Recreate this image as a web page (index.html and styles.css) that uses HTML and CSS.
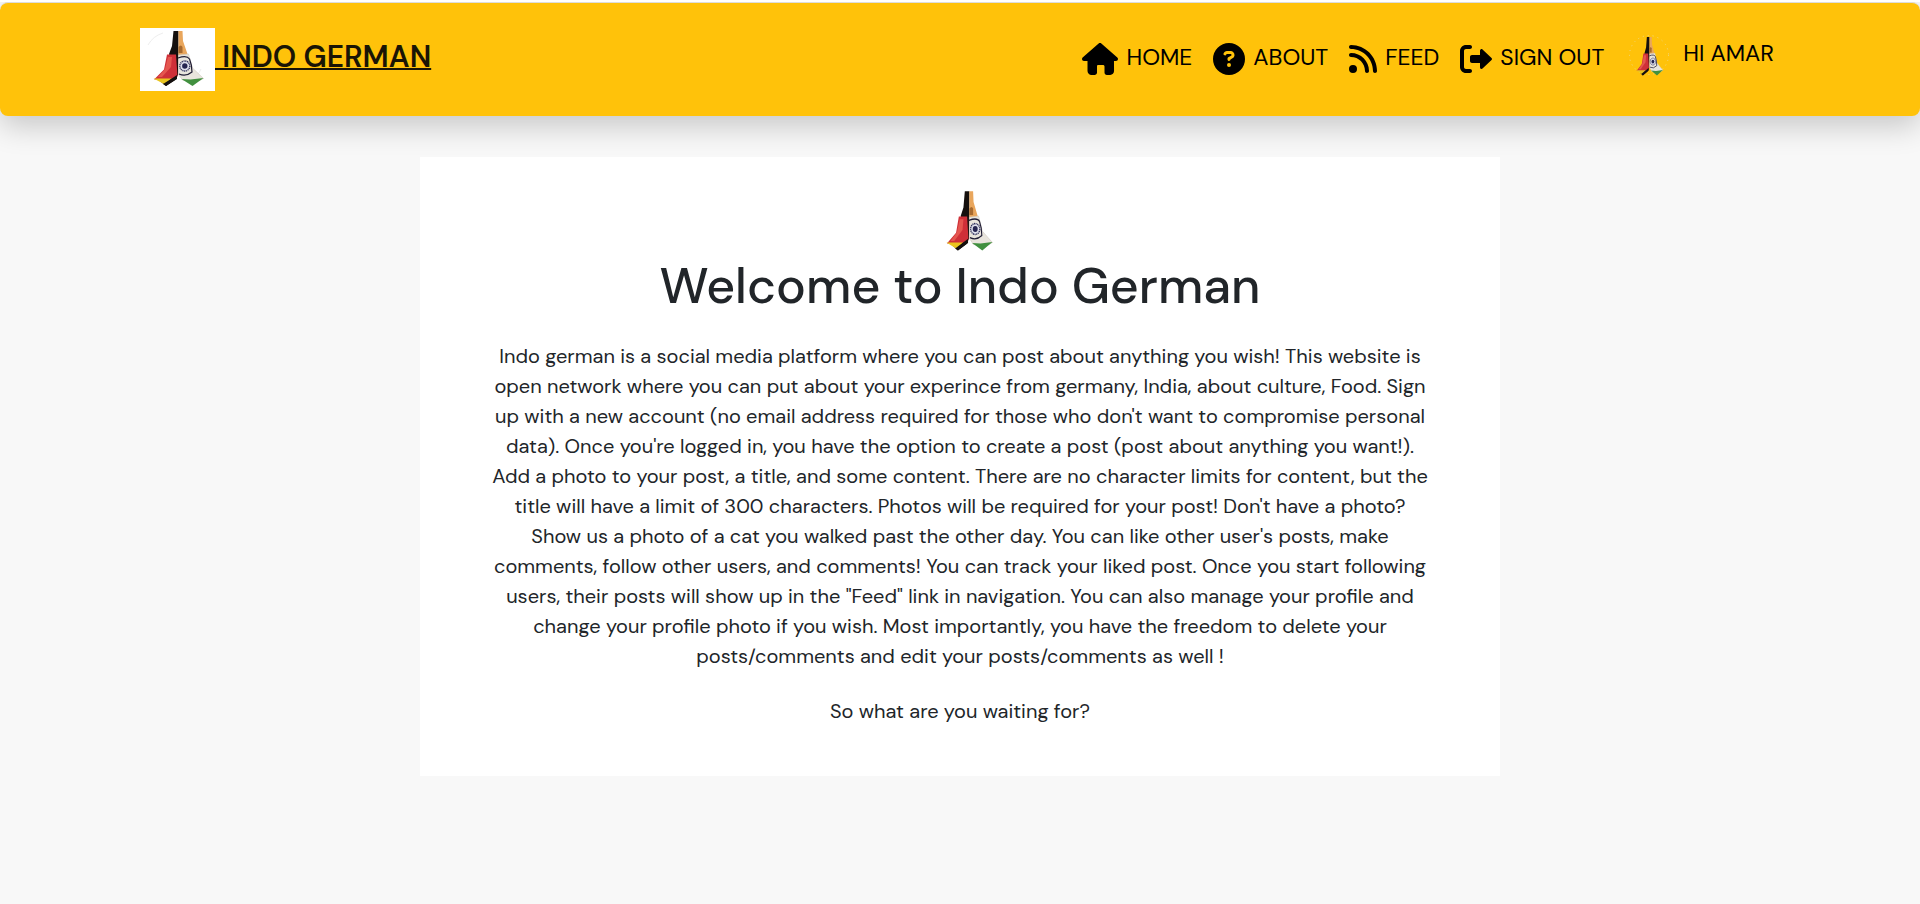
FILE: index.html
```html
<!DOCTYPE html>
<html lang="en">
<head>
<meta charset="utf-8">
<title>Indo German</title>
<link rel="stylesheet" href="styles.css">
</head>
<body>
<svg class="sprite" aria-hidden="true">
  <symbol id="hands" viewBox="0 0 75 63" preserveAspectRatio="none">
    <path fill="#15100e" d="M33.500 3h5v23l-.5 21-3 5-9 6-5-4 13-9-5-19 3-8z"/>
    <path fill="#e9a65c" d="M38.500 3h4l.5 10 5 14.500h-9.500z"/>
    <path fill="#a86a2e" d="M38.500 19q2.500-3 4 0v6h-4z"/>
    <path fill="#cf3038" d="M27 26.500l9 0 1.500 22-7 3H14l10-10z"/>
    <path fill="#e4564f" d="M28 29l4 0-1 10-9 10h-4l7-8z"/>
    <path fill="#e9c51f" d="M13.500 50.500h18l-6.500 6z"/>
    <path fill="#15100e" d="M31 51l6-4v4l-11 7-3-2z"/>
    <path fill="#e9e5dd" stroke="#cfc8bd" stroke-width=".6" d="M38.500 27l10-1 4 14 11 10.500-4 2H43l-4.500-6z"/>
    <path fill="#41903f" d="M41.500 51l9 .5 13-1.500-11 8z"/>
    <path fill="none" stroke="#201d35" stroke-width="1.200" d="M38 30q9-3 11.500 1 2.500 6 2.500 13-6 5-13 2"/>
    <circle cx="44.800" cy="38" r="5" fill="#dfe0ec" stroke="#34345f" stroke-width="1.400" stroke-dasharray="1.200 .6"/>
    <circle cx="44.800" cy="38" r="2.700" fill="#252450"/>
  </symbol>
</svg>
<header class="navbar">
  <a class="brand" href="#"><svg class="brand-logo" aria-hidden="true"><path d="M8 17Q13 8 23 5M48 52Q58 49 61 41" fill="none" stroke="#eeeeee"/><use href="#hands"/></svg><span>&nbsp;INDO GERMAN</span></a>
  <nav class="links">
    <a href="#"><svg width="36" height="32" viewBox="0 0 576 512" aria-hidden="true"><path d="M575.8 255.500c0 18-15 32.100-32 32.100h-32l.7 160.200c.2 35.500-28.500 64.300-64 64.300h-48.400c-22.100 0-40-17.900-40-40V376c0-17.700-14.300-24-32-24h-64c-17.700 0-24 6.300-24 24v96c0 22.100-17.900 40-40 40h-48c-35.300 0-64-28.700-64-64V287.600H32c-18 0-32-14-32-32.100 0-9 3-17 10-24L266.400 8c7-7 15-8 22-8s15 2 21 7l255.400 224.500c8 7 12 15 11 24z"/></svg><span>HOME</span></a>
    <a href="#"><svg width="32" height="32" viewBox="0 0 512 512" aria-hidden="true"><path d="M256 512a256 256 0 1 0 0-512 256 256 0 1 0 0 512zM169.800 165.300c7.900-22.300 29.100-37.300 52.800-37.300h58.300c34.900 0 63.100 28.300 63.100 63.100 0 22.600-12.100 43.500-31.700 54.800L280 264.400c-.2 13-10.900 23.600-24 23.600-13.300 0-24-10.700-24-24v-13.500c0-8.600 4.600-16.500 12.100-20.800l44.300-25.400c4.700-2.700 7.600-7.700 7.600-13.100 0-8.400-6.800-15.100-15.100-15.100h-58.300c-3.400 0-6.400 2.100-7.500 5.300l-.4 1.200c-4.400 12.500-18.200 19-30.600 14.600s-19-18.200-14.600-30.600zM224 352a32 32 0 1 1 64 0 32 32 0 1 1-64 0z"/></svg><span>ABOUT</span></a>
    <a href="#"><svg width="28" height="32" viewBox="0 0 448 512" aria-hidden="true"><path d="M0 64c0-17.700 14.300-32 32-32 229.800 0 416 186.200 416 416 0 17.700-14.300 32-32 32s-32-14.300-32-32C384 253.600 226.400 96 32 96 14.300 96 0 81.700 0 64zm0 352a64 64 0 1 1 128 0 64 64 0 1 1-128 0zm32-256c159.100 0 288 128.900 288 288 0 17.700-14.300 32-32 32s-32-14.300-32-32c0-123.700-100.300-224-224-224-17.700 0-32-14.300-32-32s14.300-32 32-32z"/></svg><span>FEED</span></a>
    <a href="#"><svg width="32" height="32" viewBox="0 0 512 512" aria-hidden="true"><path d="M160 96c17.700 0 32-14.300 32-32s-14.300-32-32-32H96C43 32 0 75 0 128v256c0 53 43 96 96 96h64c17.700 0 32-14.300 32-32s-14.300-32-32-32H96c-17.700 0-32-14.300-32-32V128c0-17.700 14.300-32 32-32h64zm344.500 177.400c4.800-4.500 7.500-10.800 7.500-17.400s-2.700-12.900-7.500-17.400l-144-136c-7-6.600-17.200-8.400-26-4.600s-14.500 12.500-14.500 22v72H192c-17.700 0-32 14.300-32 32v64c0 17.700 14.300 32 32 32h128v72c0 9.600 5.700 18.200 14.500 22s19 2 26-4.600l144-136z"/></svg><span>SIGN OUT</span></a>
    <a class="profile" href="#"><svg class="avatar" aria-hidden="true"><circle cx="20" cy="20" r="19.500" fill="none" stroke="#f1d987" stroke-dasharray="1 4"/><use href="#hands"/></svg><span>HI AMAR</span></a>
  </nav>
</header>
<main class="card">
  <svg class="welcome-logo" aria-hidden="true"><use href="#hands"/></svg>
  <h1>Welcome to Indo German</h1>
  <p>Indo german is a social media platform where you can post about anything you wish! This website is open network where you can put about your experince from germany, India, about culture, Food. Sign up with a new account (no email address required for those who don't want to compromise personal data). Once you're logged in, you have the option to create a post (post about anything you want!). Add a photo to your post, a title, and some content. There are no character limits for content, but the title will have a limit of 300 characters. Photos will be required for your post! Don't have a photo? Show us a photo of a cat you walked past the other day. You can like other user's posts, make comments, follow other users, and comments! You can track your liked post. Once you start following users, their posts will show up in the "Feed" link in navigation. You can also manage your profile and change your profile photo if you wish. Most importantly, you have the freedom to delete your posts/comments and edit your posts/comments as well !</p>
  <p>So what are you waiting for?</p>
</main>
</body>
</html>
```
FILE: styles.css
```css
* { box-sizing: border-box; }
body {
  margin: 0;
  border-top: 2px solid #fff;
  background: #f8f8f8;
  color: #212529;
  font-family: "DM Sans", Inter, "Liberation Sans", sans-serif;
  font-size: 20px;
  line-height: 30px;
}
.sprite { display: none; }
.navbar {
  display: flex;
  align-items: flex-start;
  justify-content: space-between;
  padding: 25px 140px;
  border-top: 1px solid #dddddd;
  border-radius: 8px;
  background: #ffc20a;
  box-shadow: 0 10px 30px rgba(0, 0, 0, .2);
}
a { color: #000; text-decoration: none; }
.brand {
  display: flex;
  align-items: center;
  color: #1a1505;
  font-size: 30px;
  font-weight: 600;
}
.brand span {
  padding-bottom: 5px;
  line-height: 58px;
  text-decoration: underline;
  text-decoration-thickness: 2px;
  text-underline-offset: 1px;
}
.brand-logo { width: 75px; height: 63px; background: #fff; }
.links {
  display: flex;
  align-items: flex-start;
  gap: 21px;
  font-size: 23px;
  line-height: 28px;
}
.links a { display: flex; gap: 8px; padding-top: 15px; }
.links .profile { gap: 14px; padding: 7px 6px 0 4px; }
.profile span { padding-top: 4px; }
.avatar { width: 40px; height: 44px; }
.card {
  max-width: 1080px;
  margin: 41px auto;
  padding: 31px 70px 50px;
  background: #fff;
  text-align: center;
}
.welcome-logo {
  box-sizing: content-box;
  display: block;
  width: 69px;
  height: 68px;
  margin: 0 auto;
  padding-left: 16px;
}
h1 {
  margin: 0 0 25px;
  font-size: 50px;
  font-weight: 500;
  line-height: 60px;
}
p { margin: 0 0 25px; }
p:last-child { margin: 0; }
```
